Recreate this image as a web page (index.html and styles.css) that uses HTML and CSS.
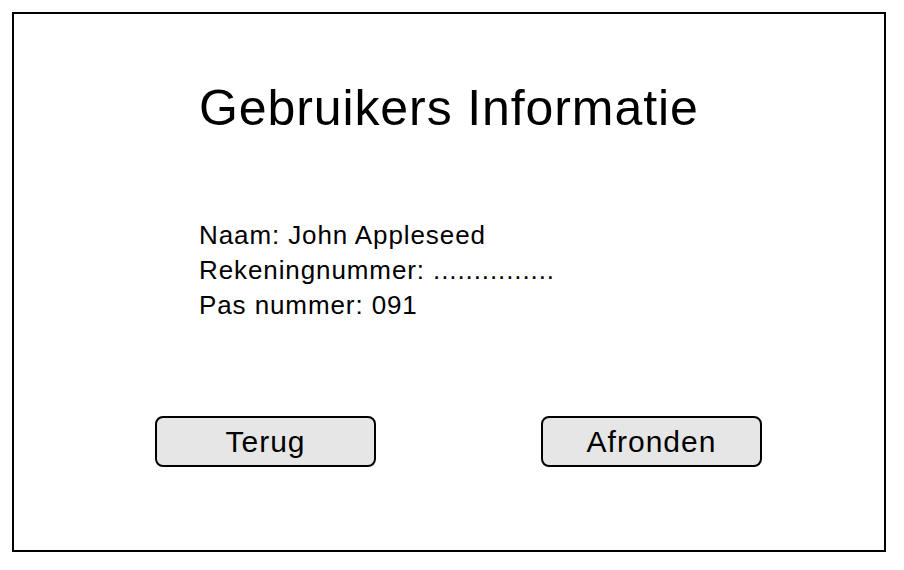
FILE: index.html
```html
<!DOCTYPE html>
<html lang="nl">
<head>
    <meta charset="UTF-8">
    <meta name="viewport" content="width=device-width, initial-scale=1.0">
    <title>Gebruikers Informatie</title>
    <link rel="stylesheet" href="styles.css">
</head>
<body>
    <div class="screen">
        <h1 class="screen-title">Gebruikers Informatie</h1>

        <div class="user-info">
            <p>Naam: John Appleseed</p>
            <p>Rekeningnummer: ...............</p>
            <p>Pas nummer: 091</p>
        </div>

        <div class="actions">
            <button type="button" class="btn">Terug</button>
            <button type="button" class="btn">Afronden</button>
        </div>
    </div>
</body>
</html>
```

FILE: styles.css
```css
* {
    margin: 0;
    padding: 0;
    box-sizing: border-box;
    font-family: 'Liberation Sans', Arial, Helvetica, sans-serif;
}

body {
    background-color: #ffffff;
    color: #000000;
}

.screen {
    width: 874px;
    height: 540px;
    margin: 12px;
    border: 2px solid #000000;
    display: flex;
    flex-direction: column;
    padding-top: 64px;
}

.screen-title {
    font-size: 50px;
    font-weight: 400;
    line-height: 60px;
    padding-left: 185px;
    letter-spacing: 0.9px;
}

.user-info {
    margin-top: 80px;
    padding-left: 185px;
    font-size: 26px;
    line-height: 35px;
    letter-spacing: 0.9px;
}

.actions {
    display: flex;
    gap: 165px;
    margin-top: 93px;
    padding-left: 141px;
}

.btn {
    width: 221px;
    height: 51px;
    border: 2px solid #000000;
    border-radius: 8px;
    background-color: #e6e6e6;
    color: #000000;
    font-size: 30px;
    letter-spacing: 1px;
    cursor: pointer;
}
```
